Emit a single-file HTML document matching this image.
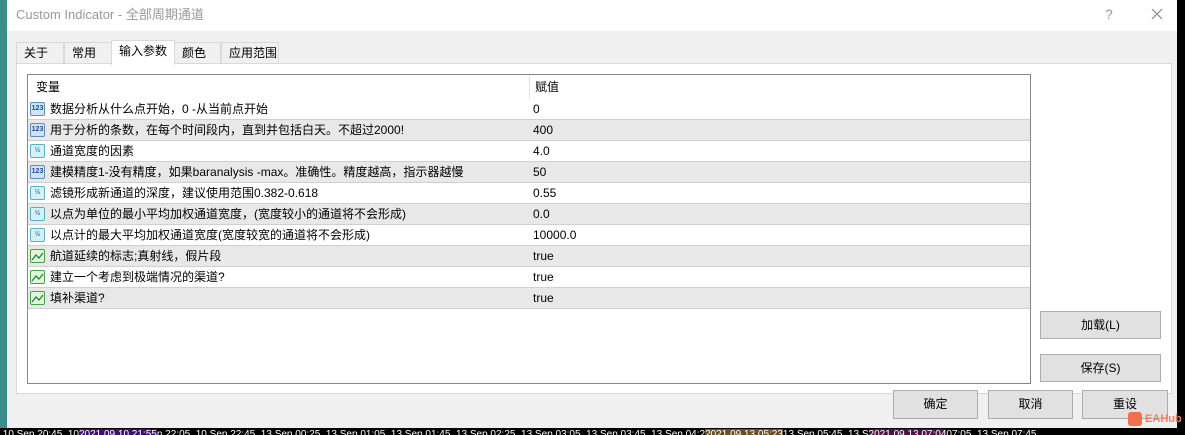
<!DOCTYPE html>
<html><head><meta charset="utf-8"><style>
*{margin:0;padding:0;box-sizing:border-box}
html,body{width:1185px;height:435px;overflow:hidden}
body{background:#000;position:relative;font-family:"Liberation Sans","Noto Sans CJK SC",sans-serif;font-size:12px;line-height:14px;color:#000}
.abs{position:absolute}
#teal{left:0;top:0;width:7px;height:428px;background:#3a8c8c}
#win{left:7px;top:0;width:1170px;height:428px;background:#f0f0f0}
#title{left:7px;top:0;width:1170px;height:31px;background:#fff}
.tab{top:42px;height:22px;background:#f0f0f0;border:1px solid #d9d9d9;border-bottom:none;padding:3px 0 0 7px;font-size:12px;line-height:14px}
#panel{left:16px;top:63px;width:1156px;height:331px;background:#fff;border:1px solid #d9d9d9}
#tbl{left:27px;top:74px;width:1004px;height:310px;border:1px solid #828790;background:#fff}
.row{position:absolute;left:0;width:1002px;height:21px;border-bottom:1px solid #d0d0d0}
.row span{position:absolute;top:2px;line-height:16px;height:16px}
.btn{background:#e1e1e1;border:1px solid #adadad;text-align:center;font-size:12px}
.ic{position:absolute;left:2px;top:3px;width:15px;height:14px;border:1px solid #5a8fc0;border-radius:2px;font-size:7px;line-height:12px;text-align:center;font-weight:bold}
#axis{left:0;top:428px;width:1185px;height:7px;color:#fff;font-size:10px;line-height:13px;white-space:nowrap;overflow:hidden}
</style></head><body>
<div class="abs" id="teal"></div>
<div class="abs" id="win"></div>
<div class="abs" id="title"><span class="abs" style="left:9px;top:7px;font-size:13px;line-height:16px;color:#999">Custom Indicator - 全部周期通道</span>
<span class="abs" style="left:1098px;top:6px;font-size:14px;line-height:16px;color:#999">?</span>
<svg class="abs" style="left:1144px;top:8px" width="12" height="12"><path d="M1 1L11 11M11 1L1 11" stroke="#888" stroke-width="1.2"/></svg></div>
<div class="abs tab" style="left:16px;width:48px">关于</div>
<div class="abs tab" style="left:64px;width:48px">常用</div>
<div class="abs tab" style="left:221px;width:58px">应用范围</div>
<div class="abs tab" style="left:174px;width:47px">颜色</div>
<div class="abs" id="panel"></div>
<div class="abs tab" style="left:111px;top:40px;height:25px;width:64px;background:#fff;padding-top:3px;z-index:2">输入参数</div>
<div class="abs" id="tbl">
<div class="row" style="top:0;height:24px;border-bottom:none"><span style="left:8px;top:4px">变量</span><span style="left:507px;top:4px">赋值</span></div>
<div class="abs" style="left:501px;top:0;width:1px;height:234px;background:#e0e0e0"></div>
<div class="row" style="top:24px;background:#fff"><div class="ic" style="background:#cfe3f5;color:#1b4f8a">123</div><span style="left:22px">数据分析从什么点开始，0 -从当前点开始</span><span style="left:505px">0</span></div>
<div class="row" style="top:45px;background:#e8e8e8"><div class="ic" style="background:#cfe3f5;color:#1b4f8a">123</div><span style="left:22px">用于分析的条数，在每个时间段内，直到并包括白天。不超过2000!</span><span style="left:505px">400</span></div>
<div class="row" style="top:66px;background:#fff"><div class="ic" style="background:#d5f1f5;color:#2a8aa0;border-color:#5ab0c0">½</div><span style="left:22px">通道宽度的因素</span><span style="left:505px">4.0</span></div>
<div class="row" style="top:87px;background:#e8e8e8"><div class="ic" style="background:#cfe3f5;color:#1b4f8a">123</div><span style="left:22px">建模精度1-没有精度，如果baranalysis -max。准确性。精度越高，指示器越慢</span><span style="left:505px">50</span></div>
<div class="row" style="top:108px;background:#fff"><div class="ic" style="background:#d5f1f5;color:#2a8aa0;border-color:#5ab0c0">½</div><span style="left:22px">滤镜形成新通道的深度，建议使用范围0.382-0.618</span><span style="left:505px">0.55</span></div>
<div class="row" style="top:129px;background:#e8e8e8"><div class="ic" style="background:#d5f1f5;color:#2a8aa0;border-color:#5ab0c0">½</div><span style="left:22px">以点为单位的最小平均加权通道宽度，(宽度较小的通道将不会形成)</span><span style="left:505px">0.0</span></div>
<div class="row" style="top:150px;background:#fff"><div class="ic" style="background:#d5f1f5;color:#2a8aa0;border-color:#5ab0c0">½</div><span style="left:22px">以点计的最大平均加权通道宽度(宽度较宽的通道将不会形成)</span><span style="left:505px">10000.0</span></div>
<div class="row" style="top:171px;background:#e8e8e8"><div class="ic" style="background:#dff5df;border-color:#4aa04a"><svg width="13" height="12"><path d="M1 10L5 5L8 8L12 3" stroke="#2a8a2a" fill="none" stroke-width="1.3"/></svg></div><span style="left:22px">航道延续的标志;真射线，假片段</span><span style="left:505px">true</span></div>
<div class="row" style="top:192px;background:#fff"><div class="ic" style="background:#dff5df;border-color:#4aa04a"><svg width="13" height="12"><path d="M1 10L5 5L8 8L12 3" stroke="#2a8a2a" fill="none" stroke-width="1.3"/></svg></div><span style="left:22px">建立一个考虑到极端情况的渠道?</span><span style="left:505px">true</span></div>
<div class="row" style="top:213px;background:#e8e8e8"><div class="ic" style="background:#dff5df;border-color:#4aa04a"><svg width="13" height="12"><path d="M1 10L5 5L8 8L12 3" stroke="#2a8a2a" fill="none" stroke-width="1.3"/></svg></div><span style="left:22px">填补渠道?</span><span style="left:505px">true</span></div>
</div>
<div class="abs btn" style="left:1040px;top:311px;width:121px;height:28px;line-height:26px">加载(L)</div>
<div class="abs btn" style="left:1040px;top:354px;width:121px;height:28px;line-height:26px">保存(S)</div>
<div class="abs btn" style="left:893px;top:390px;width:85px;height:29px;line-height:27px">确定</div>
<div class="abs btn" style="left:988px;top:390px;width:85px;height:29px;line-height:27px">取消</div>
<div class="abs btn" style="left:1082px;top:390px;width:86px;height:29px;line-height:27px">重设</div>
<div class="abs" style="left:1128px;top:410px;width:48px;height:18px;color:#f08060;font-size:11px;font-weight:bold;line-height:18px;white-space:nowrap"><span style="display:inline-block;width:14px;height:14px;background:#f07050;border-radius:3px;vertical-align:middle"></span> EAHub</div>
<div class="abs" id="axis">&nbsp;10 Sep 20:45 &nbsp;10<span style="background:#3a1070">2021.09.10 21:55</span>n 22:05 &nbsp;10 Sep 22:45 &nbsp;13 Sep 00:25 &nbsp;13 Sep 01:05 &nbsp;13 Sep 01:45 &nbsp;13 Sep 02:25 &nbsp;13 Sep 03:05 &nbsp;13 Sep 03:45 &nbsp;13 Sep 04:2<span style="background:#6a5020">2021.09.13 05:23</span>13 Sep 05:45 &nbsp;13 S<span style="background:#501040">2021.09.13 07:04</span>07:05 &nbsp;13 Sep 07:45</div>
</body></html>
